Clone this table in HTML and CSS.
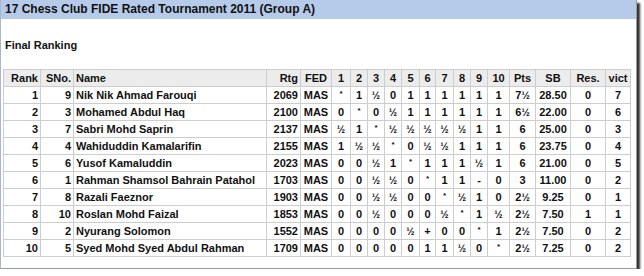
FILE: index.html
```html
<!DOCTYPE html>
<html>
<head>
<meta charset="utf-8">
<link rel="stylesheet" href="styles.css">
</head>
<body>
<div class="frame">
  <div class="titlebar">17 Chess Club FIDE Rated Tournament 2011 (Group A)</div>
  <div class="subtitle">Final Ranking</div>
  <table class="rank">
    <colgroup>
      <col style="width:37px"><col style="width:33px"><col style="width:193px"><col style="width:34px"><col style="width:31px">
      <col style="width:19px"><col style="width:17px"><col style="width:17px"><col style="width:17px"><col style="width:18px">
      <col style="width:16px"><col style="width:18px"><col style="width:17px"><col style="width:17px"><col style="width:22px">
      <col style="width:26px"><col style="width:35px"><col style="width:35px"><col style="width:25px">
    </colgroup>
    <thead>
      <tr>
        <th class="r">Rank</th><th class="r">SNo.</th><th class="l">Name</th><th class="r">Rtg</th><th>FED</th>
        <th>1</th><th>2</th><th>3</th><th>4</th><th>5</th><th>6</th><th>7</th><th>8</th><th>9</th><th>10</th>
        <th>Pts</th><th>SB</th><th>Res.</th><th>vict</th>
      </tr>
    </thead>
    <tbody>
      <tr><td class="r">1</td><td class="r">9</td><td class="l">Nik Nik Ahmad Farouqi</td><td class="r">2069</td><td>MAS</td>
        <td class="x">*</td><td>1</td><td class="h">½</td><td>0</td><td>1</td><td>1</td><td>1</td><td>1</td><td>1</td><td>1</td>
        <td>7<span class="h">½</span></td><td>28.50</td><td>0</td><td>7</td></tr>
      <tr><td class="r">2</td><td class="r">3</td><td class="l">Mohamed Abdul Haq</td><td class="r">2100</td><td>MAS</td>
        <td>0</td><td class="x">*</td><td>0</td><td class="h">½</td><td>1</td><td>1</td><td>1</td><td>1</td><td>1</td><td>1</td>
        <td>6<span class="h">½</span></td><td>22.00</td><td>0</td><td>6</td></tr>
      <tr><td class="r">3</td><td class="r">7</td><td class="l">Sabri Mohd Saprin</td><td class="r">2137</td><td>MAS</td>
        <td class="h">½</td><td>1</td><td class="x">*</td><td class="h">½</td><td class="h">½</td><td class="h">½</td><td class="h">½</td><td class="h">½</td><td>1</td><td>1</td>
        <td>6</td><td>25.00</td><td>0</td><td>3</td></tr>
      <tr><td class="r">4</td><td class="r">4</td><td class="l">Wahiduddin Kamalarifin</td><td class="r">2155</td><td>MAS</td>
        <td>1</td><td class="h">½</td><td class="h">½</td><td class="x">*</td><td>0</td><td class="h">½</td><td class="h">½</td><td>1</td><td>1</td><td>1</td>
        <td>6</td><td>23.75</td><td>0</td><td>4</td></tr>
      <tr><td class="r">5</td><td class="r">6</td><td class="l">Yusof Kamaluddin</td><td class="r">2023</td><td>MAS</td>
        <td>0</td><td>0</td><td class="h">½</td><td>1</td><td class="x">*</td><td>1</td><td>1</td><td>1</td><td class="h">½</td><td>1</td>
        <td>6</td><td>21.00</td><td>0</td><td>5</td></tr>
      <tr><td class="r">6</td><td class="r">1</td><td class="l">Rahman Shamsol Bahrain Patahol</td><td class="r">1703</td><td>MAS</td>
        <td>0</td><td>0</td><td class="h">½</td><td class="h">½</td><td>0</td><td class="x">*</td><td>1</td><td>1</td><td>-</td><td>0</td>
        <td>3</td><td>11.00</td><td>0</td><td>2</td></tr>
      <tr><td class="r">7</td><td class="r">8</td><td class="l">Razali Faeznor</td><td class="r">1903</td><td>MAS</td>
        <td>0</td><td>0</td><td class="h">½</td><td class="h">½</td><td>0</td><td>0</td><td class="x">*</td><td class="h">½</td><td>1</td><td>0</td>
        <td>2<span class="h">½</span></td><td>9.25</td><td>0</td><td>1</td></tr>
      <tr><td class="r">8</td><td class="r">10</td><td class="l">Roslan Mohd Faizal</td><td class="r">1853</td><td>MAS</td>
        <td>0</td><td>0</td><td class="h">½</td><td>0</td><td>0</td><td>0</td><td class="h">½</td><td class="x">*</td><td>1</td><td class="h">½</td>
        <td>2<span class="h">½</span></td><td>7.50</td><td>1</td><td>1</td></tr>
      <tr><td class="r">9</td><td class="r">2</td><td class="l">Nyurang Solomon</td><td class="r">1552</td><td>MAS</td>
        <td>0</td><td>0</td><td>0</td><td>0</td><td class="h">½</td><td>+</td><td>0</td><td>0</td><td class="x">*</td><td>1</td>
        <td>2<span class="h">½</span></td><td>7.50</td><td>0</td><td>2</td></tr>
      <tr><td class="r">10</td><td class="r">5</td><td class="l">Syed Mohd Syed Abdul Rahman</td><td class="r">1709</td><td>MAS</td>
        <td>0</td><td>0</td><td>0</td><td>0</td><td>0</td><td>1</td><td>1</td><td class="h">½</td><td>0</td><td class="x">*</td>
        <td>2<span class="h">½</span></td><td>7.25</td><td>0</td><td>2</td></tr>
    </tbody>
  </table>
</div>
</body>
</html>
```
FILE: styles.css
```css
html, body {
  margin: 0;
  padding: 0;
  background: #ffffff;
}
body {
  font-family: "Liberation Sans", Arial, sans-serif;
  font-weight: bold;
  color: #111;
}
.frame {
  width: 637px;
  height: 269px;
  box-sizing: border-box;
  border-left: 1px solid #a9b7cc;
  border-right: 1px solid #9a9a9a;
  border-bottom: 1px solid #9a9a9a;
  box-shadow: 3px 3px 2px #333;
  background: #fff;
}
.titlebar {
  height: 19px;
  line-height: 19px;
  background: #b6cae9;
  font-size: 12px;
  padding-left: 4px;
}
.subtitle {
  font-size: 11px;
  line-height: 13px;
  padding: 20px 0 0 4px;
  height: 50px;
  box-sizing: border-box;
}
.rank {
  margin: 0 0 0 2px;
  border-collapse: collapse;
  table-layout: fixed;
  width: 627px;
  font-size: 11px;
}
.rank tr {
  height: 17px;
}
.rank th, .rank td {
  border: 1px solid #cdcdcd;
  padding: 0 2px;
  text-align: center;
  white-space: nowrap;
  overflow: hidden;
  line-height: 13px;
}
.rank th {
  background: #ececec;
}
.rank .r { text-align: right; }
.rank .l { text-align: left; }
.h { font-size: 10px; }
.x { font-size: 8px; vertical-align: top; line-height: 11px; }
```
